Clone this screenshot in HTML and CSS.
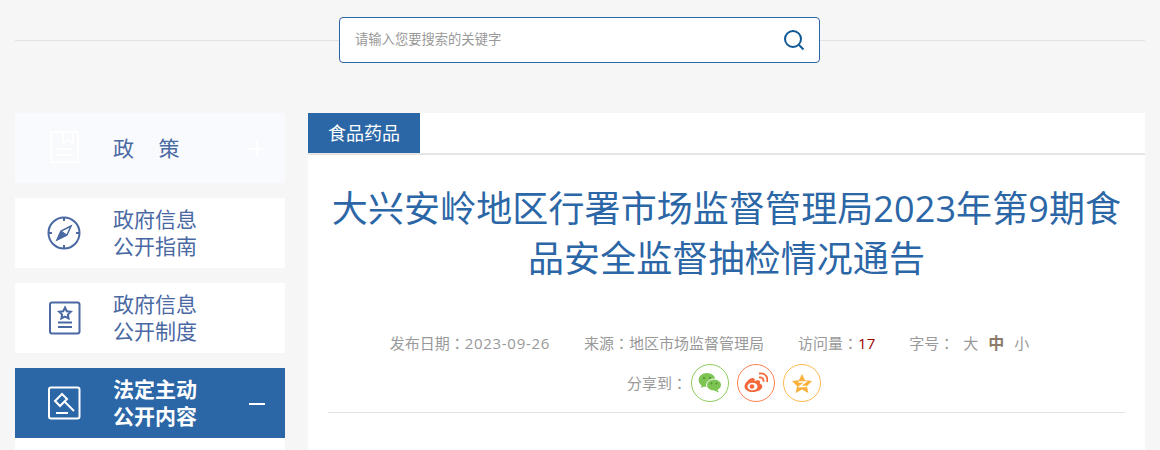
FILE: index.html
```html
<!DOCTYPE html>
<html lang="zh-CN">
<head>
    <meta charset="UTF-8">
    <title>大兴安岭地区行署市场监督管理局2023年第9期食品安全监督抽检情况通告</title>
    <link rel="stylesheet" href="styles.css">
</head>
<body>

<div class="search-bar">
    <div class="search-box">
        <span class="search-hint">请输入您要搜索的关键字</span>
        <svg class="search-icon" width="22" height="22" viewBox="0 0 22 22" fill="none" stroke="#0f5a96" stroke-width="2">
            <circle cx="10" cy="10" r="8"/>
            <path d="M16 16l4.500 4.500"/>
        </svg>
    </div>
</div>

<div class="wrap">
    <!-- 左侧菜单 -->
    <div class="side">
        <div class="side-item policy">
            <svg class="side-icon" width="32" height="34" viewBox="0 0 32 34" fill="none" stroke="#fff" stroke-width="2">
                <rect x="3" y="1" width="27" height="30" rx="1"/>
                <path d="M15 1v11l5-3 5 3V1"/>
                <path d="M9 18h15M8 24h17"/>
            </svg>
            <div class="side-text wide">政 策</div>
            <span class="side-sign">
                <svg width="16" height="16" viewBox="0 0 16 16" stroke="#fff" stroke-width="2"><path d="M0 8h16M8 0v16"/></svg>
            </span>
        </div>
        <div class="side-item">
            <svg class="side-icon" width="34" height="34" viewBox="0 0 34 34" fill="none" stroke="#4a69a3" stroke-width="2">
                <circle cx="17" cy="17" r="15.500"/>
                <path d="M17 1v4M17 29v4M1 17h4M29 17h4"/>
                <path d="M24 10l-10 5-4 9 10-5z" stroke-width="1.500"/>
                <path d="M14 15l6 4-10 5z" fill="#4a69a3" stroke-width="1"/>
            </svg>
            <div class="side-text">
                <div class="side-line">政府信息</div>
                <div class="side-line">公开指南</div>
            </div>
        </div>
        <div class="side-item">
            <svg class="side-icon" width="34" height="34" viewBox="0 0 34 34" fill="none" stroke="#4a69a3" stroke-width="2">
                <rect x="3" y="1.500" width="29.500" height="31" rx="2"/>
                <path d="M18 6.500l1.800 3.700 4 .5-2.900 2.800.7 4-3.600-1.900-3.600 1.900.7-4-2.900-2.800 4-.5z"/>
                <path d="M11 21.500h14M11 26h14"/>
            </svg>
            <div class="side-text">
                <div class="side-line">政府信息</div>
                <div class="side-line">公开制度</div>
            </div>
        </div>
        <div class="side-item active">
            <svg class="side-icon" width="34" height="34" viewBox="0 0 34 34" fill="none" stroke="#fff" stroke-width="2">
                <rect x="2" y="1.500" width="30.500" height="31" rx="2"/>
                <path d="M15 8l-7 7 5 5 7-7zM17 15l10 10"/>
                <path d="M9 27h12"/>
            </svg>
            <div class="side-text bold">
                <div class="side-line">法定主动</div>
                <div class="side-line">公开内容</div>
            </div>
            <span class="side-sign">
                <svg width="16" height="16" viewBox="0 0 16 16" stroke="#fff" stroke-width="2"><path d="M0 8h16"/></svg>
            </span>
        </div>
        <div class="side-sub"></div>
    </div>

    <!-- 正文 -->
    <div class="main">
        <div class="tab-line">
            <span class="tab">食品药品</span>
        </div>
        <div class="article">
            <h1>大兴安岭地区行署市场监督管理局2023年第9期食品安全监督抽检情况通告</h1>
            <div class="meta">
                <span>发布日期<span class="colon" lang="zh-TW">：</span><span class="date">2023-09-26</span></span>
                <span>来源<span class="colon" lang="zh-TW">：</span>地区市场监督管理局</span>
                <span>访问量<span class="colon" lang="zh-TW">：</span><em class="count">17</em></span>
                <span>字号<span class="colon" lang="zh-TW">：</span><i class="size">大</i><i class="size current">中</i><i class="size">小</i></span>
            </div>
            <div class="share">
                <span class="share-label">分享到<span class="colon" lang="zh-TW">：</span></span>
                <span class="share-btn wechat">
                    <svg width="24" height="20" viewBox="0 0 24 20">
                        <ellipse cx="9" cy="7" rx="8.500" ry="7" fill="#7dc452"/>
                        <path d="M4 11l-1 4 4-2z" fill="#7dc452"/>
                        <circle cx="6" cy="5" r="1" fill="#4d8a2c"/>
                        <circle cx="12" cy="5" r="1" fill="#4d8a2c"/>
                        <ellipse cx="16" cy="12" rx="7.500" ry="6" fill="#7dc452" stroke="#fff"/>
                        <path d="M19 16l2 3.500-5-2z" fill="#7dc452"/>
                        <circle cx="13.500" cy="10.500" r=".9" fill="#4d8a2c"/>
                        <circle cx="18.500" cy="10.500" r=".9" fill="#4d8a2c"/>
                    </svg>
                </span>
                <span class="share-btn weibo">
                    <svg width="24" height="22" viewBox="0 0 24 22">
                        <path d="M9 20c-4.500 0-8.500-2-8.500-5.500C.5 11 5 6.500 8.500 6c2-.3 2.500 1.200 2 3 2.500-1 5-1 5.500.7.300 1-.2 1.500-.2 1.800 1.500.5 2.500 1.500 2.500 3C18.300 17.500 13.500 20 9 20z" fill="#f4683a"/>
                        <ellipse cx="8.500" cy="14.500" rx="5" ry="3.800" fill="#fff"/>
                        <circle cx="8" cy="14.500" r="2.300" fill="#f4683a"/>
                        <path d="M15 5.500c3-.7 5 1.500 4.300 4.300M15 1.500c6-1 9.500 3.500 8 8.500" fill="none" stroke="#f4683a" stroke-width="1.800"/>
                    </svg>
                </span>
                <span class="share-btn qzone">
                    <svg width="20" height="19" viewBox="0 0 20 19">
                        <path d="M10 0l3 6.200 7 .9-5 4.800 1.200 7L10 15.600 3.800 19 5 11.900 0 7.100l7-.9z" fill="#fbb03b"/>
                        <path d="M6.500 8h7l-6 4.500h7" fill="none" stroke="#fff" stroke-width="1.500"/>
                    </svg>
                </span>
            </div>
            <div class="rule"></div>
        </div>
    </div>
</div>

</body>
</html>
```

FILE: styles.css
```css
html, body {
    height: 450px;
    overflow: hidden;
}
body {
    margin: 0;
    padding: 0 15px;
    background-color: #f6f6f6;
    font-family: "Open Sans", "Noto Sans CJK SC", sans-serif;
}
.search-bar {
    height: 113px;
    display: flex;
    justify-content: center;
    align-items: flex-start;
    background: linear-gradient(#e2e2e2, #e2e2e2) no-repeat 0 40px / 100% 1px;
}
.search-box {
    width: 479px;
    height: 44px;
    margin-top: 17px;
    margin-left: -1px;
    display: flex;
    align-items: center;
    justify-content: space-between;
    background-color: #fff;
    border: 1px solid #2a66a6;
    border-radius: 4px;
}
.search-hint {
    margin-left: 15px;
    margin-top: -3px;
    font-size: 13.300px;
    color: #999;
}
.search-icon {
    margin-right: 14px;
}
.wrap {
    display: flex;
    gap: 23px;
}
.side {
    width: 270px;
    flex-shrink: 0;
}
.side-item {
    height: 70px;
    margin-bottom: 15px;
    display: flex;
    align-items: center;
    position: relative;
    background-color: #fff;
    color: #4a69a3;
}
.side-item.policy {
    background-color: #f8fafd;
}
.side-item.active {
    margin-bottom: 0;
    background-color: #2b66a6;
    color: #fff;
}
.side-icon {
    width: 34px;
    margin-left: 32px;
    flex-shrink: 0;
}
.side-text {
    margin-left: 32px;
    font-size: 21px;
}
.side-line {
    height: 27px;
    line-height: 27px;
}
.side-text.wide {
    margin-top: -2px;
    word-spacing: 19px;
}
.side-text.bold {
    font-weight: bold;
}
.side-sign {
    position: absolute;
    right: 20px;
    top: 27px;
    height: 16px;
}
.side-sub {
    height: 12px;
    background-color: #fff;
}
.main {
    flex: 1;
    background-color: #fff;
    height: 337px;
}
.tab-line {
    height: 40px;
    border-bottom: 2px solid #e5e5e5;
}
.tab {
    display: block;
    width: 112px;
    height: 40px;
    line-height: 40px;
    text-align: center;
    font-size: 18px;
    color: #fff;
    background-color: #2b66a6;
}
.article {
    padding: 29px 20px 0;
}
h1 {
    margin: 0;
    text-align: center;
    font-size: 36px;
    font-weight: normal;
    letter-spacing: .1px;
    line-height: 50px;
    color: #2b66a6;
}
.meta {
    margin-top: 44px;
    padding-right: 34px;
    height: 28px;
    display: flex;
    justify-content: center;
    align-items: center;
    gap: 34px;
    font-size: 15px;
    color: #999;
}
.colon {
    font-family: "Noto Sans CJK TC", sans-serif;
}
.date {
    letter-spacing: .7px;
}
.count {
    font-style: normal;
    color: #a00000;
}
.size {
    font-style: normal;
    margin-left: 9px;
}
.size.current {
    margin-left: 10px;
    font-size: 16px;
    font-weight: bold;
    color: #8c7b6b;
}
.size.current + .size {
    margin-left: 10px;
}
.share {
    margin-top: 8px;
    padding-right: 5px;
    display: flex;
    justify-content: center;
    align-items: center;
    gap: 8px;
    font-size: 15px;
    color: #999;
}
.share-label {
    margin-right: -4px;
    margin-top: -2px;
}
.share-btn {
    width: 38px;
    height: 38px;
    box-sizing: border-box;
    display: flex;
    justify-content: center;
    align-items: center;
    background-color: #fff;
    border: 1px solid;
    border-radius: 50%;
}
.wechat {
    border-color: #8ccb5e;
}
.weibo {
    border-color: #ff7f50;
}
.qzone {
    border-color: #fdbb4f;
}
.rule {
    margin-top: 10px;
    border-top: 1px solid #e2e2e2;
}
```
